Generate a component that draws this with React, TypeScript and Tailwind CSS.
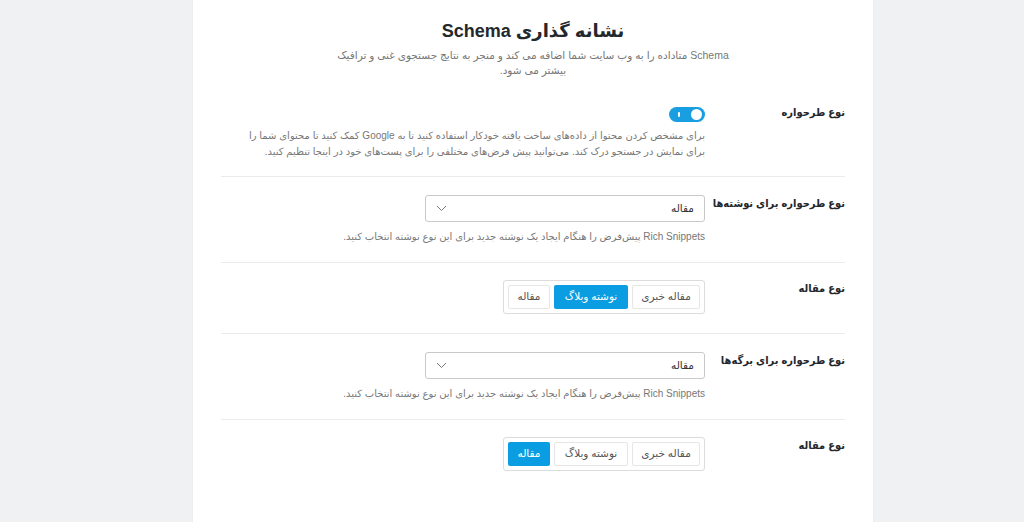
const font = { fontFamily: '"Liberation Sans", "DejaVu Sans", sans-serif' };
const condensed = { fontFamily: '"Liberation Sans", "DejaVu Sans Condensed", "DejaVu Sans", sans-serif' };

const Label = ({ children }: { children: React.ReactNode }) => (
    <div className="w-[140px] shrink-0 whitespace-nowrap text-[11px] font-bold leading-4 text-[#23282d]" style={condensed}>
        {children}
    </div>
);

const Toggle = () => (
    <div className="relative h-[15px] w-[36px] rounded-full bg-[#1a9ee2]">
        <span className="absolute left-[9px] top-[5px] h-[5px] w-[2px] rounded-sm bg-white" />
        <span className="absolute right-[3px] top-[2px] h-[11px] w-[11px] rounded-full bg-white" />
    </div>
);

const Select = ({ value }: { value: string }) => (
    <div className="flex h-[27px] w-[280px] items-center justify-between rounded-[3px] border border-[#c9c9c9] bg-white pl-[10px] pr-[10px] text-[10.5px] text-[#333]">
        <span>{value}</span>
        <svg width="11" height="7" viewBox="0 0 11 7" fill="none">
            <path d="M1 1l4.5 4.5L10 1" stroke="#777" strokeWidth="1" />
        </svg>
    </div>
);

const ButtonGroup = ({ active }: { active: number }) => {
    const items = [
        { text: 'مقاله خبری', w: 'w-[68px]' },
        { text: 'نوشته وبلاگ', w: 'w-[74px]' },
        { text: 'مقاله', w: 'w-[42px]' },
    ];
    return (
        <div className="flex gap-[4px] rounded-[3px] border border-[#dcdcdc] bg-white p-[4px]">
            {items.map((it, i) =>
                i === active ? (
                    <div key={i} className={`${it.w} flex h-[24px] items-center justify-center rounded-[2px] bg-[#0b9de2] text-[10.5px] text-white`}>
                        {it.text}
                    </div>
                ) : (
                    <div key={i} className={`${it.w} flex h-[24px] items-center justify-center rounded-[2px] border border-[#e6e6e6] text-[10.5px] text-[#555]`}>
                        {it.text}
                    </div>
                )
            )}
        </div>
    );
};

const Help = ({ children }: { children: React.ReactNode }) => (
    <p className="mt-[7px] text-[10px] leading-4 text-[#777]">{children}</p>
);

export default function App() {
    return (
        <div className="min-h-screen bg-[#f0f1f3] pl-[42px]" style={font}>
            <div dir="rtl" className="mx-auto min-h-[522px] w-[680px] bg-white px-[28px] shadow-[0_0_2px_rgba(0,0,0,0.06)]">
                <div className="flex flex-col items-center pt-[17px] text-center">
                    <h1 className="text-[18px] font-bold leading-7 text-[#23282d]">نشانه گذاری Schema</h1>
                    <p className="mt-[3px] max-w-[405px] text-[10.5px] leading-[15px] text-[#777]">
                        Schema متاداده را به وب سایت شما اضافه می کند و منجر به نتایج جستجوی غنی و ترافیک بیشتر می شود.
                    </p>
                </div>

                <div className="flex border-b border-[#ebebeb] pb-[16px] pt-[26px]">
                    <Label>نوع طرحواره</Label>
                    <div className="flex-1">
                        <div className="mt-[3px]">
                            <Toggle />
                        </div>
                        <p className="mt-[6px] pl-[12px] text-[10px] leading-4 text-[#777]">
                            برای مشخص کردن محتوا از داده‌های ساخت یافته خودکار استفاده کنید تا به Google کمک کنید تا محتوای شما را برای نمایش در جستجو درک کند. می‌توانید پیش فرض‌های مختلفی را برای پست‌های خود در اینجا تنظیم کنید.
                        </p>
                    </div>
                </div>

                <div className="flex border-b border-[#ebebeb] pb-[17px] pt-[18px]">
                    <Label>نوع طرحواره برای نوشته‌ها</Label>
                    <div className="flex-1">
                        <Select value="مقاله" />
                        <Help>Rich Snippets پیش‌فرض را هنگام ایجاد یک نوشته جدید برای این نوع نوشته انتخاب کنید.</Help>
                    </div>
                </div>

                <div className="flex border-b border-[#ebebeb] pb-[19px] pt-[17px]">
                    <Label>نوع مقاله</Label>
                    <div className="flex-1">
                        <div className="flex">
                            <ButtonGroup active={1} />
                        </div>
                    </div>
                </div>

                <div className="flex border-b border-[#ebebeb] pb-[17px] pt-[18px]">
                    <Label>نوع طرحواره برای برگه‌ها</Label>
                    <div className="flex-1">
                        <Select value="مقاله" />
                        <Help>Rich Snippets پیش‌فرض را هنگام ایجاد یک نوشته جدید برای این نوع نوشته انتخاب کنید.</Help>
                    </div>
                </div>

                <div className="flex pt-[17px]">
                    <Label>نوع مقاله</Label>
                    <div className="flex-1">
                        <div className="flex">
                            <ButtonGroup active={2} />
                        </div>
                    </div>
                </div>
            </div>
        </div>
    );
}
